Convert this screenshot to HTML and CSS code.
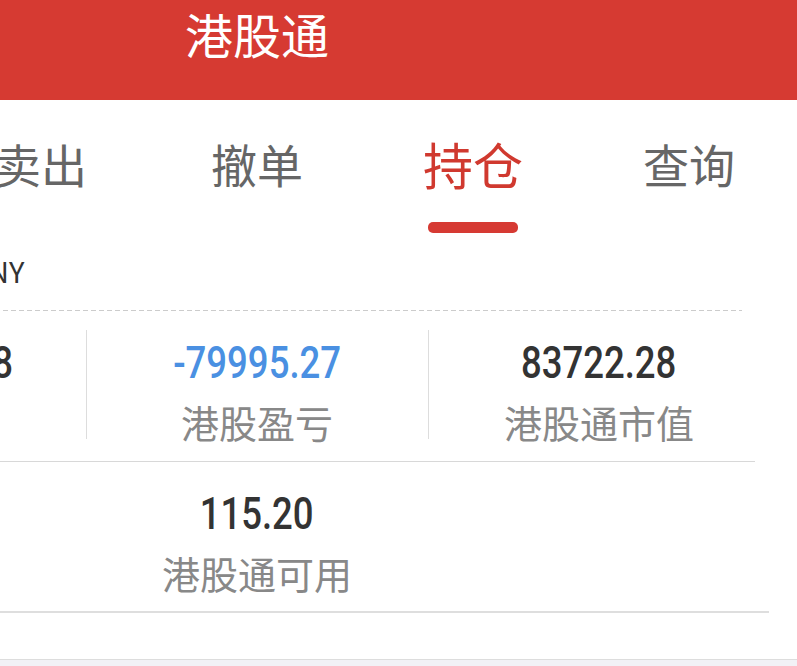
FILE: index.html
```html
<!DOCTYPE html>
<html lang="zh-CN">

<head>
    <meta charset="UTF-8">
    <meta name="viewport" content="width=device-width, initial-scale=1.0">
    <title>港股通</title>
    <link rel="stylesheet" href="styles.css">
</head>

<body>
    <div class="page">
        <header class="title-bar">
            <h1>港股通</h1>
        </header>

        <nav class="tabs">
            <a href="#buy" class="tab">买入<span class="tab-line"></span></a>
            <a href="#sell" class="tab">卖出<span class="tab-line"></span></a>
            <a href="#cancel" class="tab">撤单<span class="tab-line"></span></a>
            <a href="#position" class="tab active">持仓<span class="tab-line"></span></a>
            <a href="#query" class="tab">查询<span class="tab-line"></span></a>
        </nav>

        <div class="currency">资金单位：人民币 CNY</div>

        <div class="stats stats-top">
            <div class="cell">
                <div class="value"><span>1003837.48</span></div>
                <div class="label">总资产</div>
            </div>
            <div class="cell divided">
                <div class="value loss"><span>-79995.27</span></div>
                <div class="label">港股盈亏</div>
            </div>
            <div class="cell divided">
                <div class="value"><span>83722.28</span></div>
                <div class="label">港股通市值</div>
            </div>
        </div>

        <div class="stats stats-bottom">
            <div class="cell">
                <div class="value"><span>0.00</span></div>
                <div class="label">冻结资金</div>
            </div>
            <div class="cell">
                <div class="value"><span>115.20</span></div>
                <div class="label">港股通可用</div>
            </div>
            <div class="cell"></div>
        </div>

        <div class="bottom-bar"></div>
    </div>
</body>
</html>
```

FILE: styles.css
```css
body {
    margin: 0;
    overflow: hidden;
    background-color: #fff;
    font-family: "Noto Sans CJK SC", sans-serif;
}

/* the phone screen is wider than the window, we see its middle part */
.page {
    width: 1080px;
    margin-left: -283px;
}

.title-bar {
    height: 100px;
    background-color: #d63a32;
    text-align: center;
}

.title-bar h1 {
    margin: 0;
    padding-top: 3px;
    font-size: 48px;
    line-height: 60px;
    font-weight: 400;
    color: #fff;
}

.tabs {
    display: flex;
    height: 140px;
}

.tab {
    flex: 1;
    display: flex;
    flex-direction: column;
    align-items: center;
    padding-top: 31px;
    font-size: 46px;
    line-height: 64px;
    color: #666;
    text-decoration: none;
}

.tab-line {
    width: 90px;
    height: 11px;
    margin-top: 27px;
    border-radius: 5px;
}

.tab.active {
    font-size: 50px;
    color: #d0392f;
}

.tab.active .tab-line {
    background-color: #d63a33;
}

.currency {
    margin: 0 55px 0 14px;
    padding: 10px 0 21px;
    font-size: 29px;
    line-height: 40px;
    color: #333;
    background: repeating-linear-gradient(to right, #ccc 0 5px, transparent 5px 8px) left bottom / 100% 1px no-repeat;
}

.stats {
    display: grid;
    grid-template-columns: repeat(3, 342px);
    padding-left: 27px;
}

.stats-top {
    margin-right: 42px;
    border-bottom: 1px solid #d8d8d8;
}

.stats-bottom {
    margin-right: 28px;
    border-bottom: 2px solid #dedede;
}

.cell {
    padding: 22px 0 10px;
    text-align: center;
}

.stats-bottom .cell {
    padding-bottom: 9px;
}

.cell.divided {
    background: linear-gradient(#ddd, #ddd) left 19px / 1px 109px no-repeat;
}

.value {
    font-family: "Roboto", sans-serif;
    font-size: 44px;
    font-weight: 500;
    line-height: 60px;
    color: #333;
}

/* numbers use a narrow face on the phone */
.value span {
    display: inline-block;
    transform: scaleX(0.83);
}

.value.loss {
    color: #4a90e2;
}

.label {
    font-size: 38px;
    line-height: 58px;
    color: #888;
}

.bottom-bar {
    height: 6px;
    margin-top: 46px;
    border-top: 1px solid #ddd;
    background-color: #f2f1f6;
}
```
